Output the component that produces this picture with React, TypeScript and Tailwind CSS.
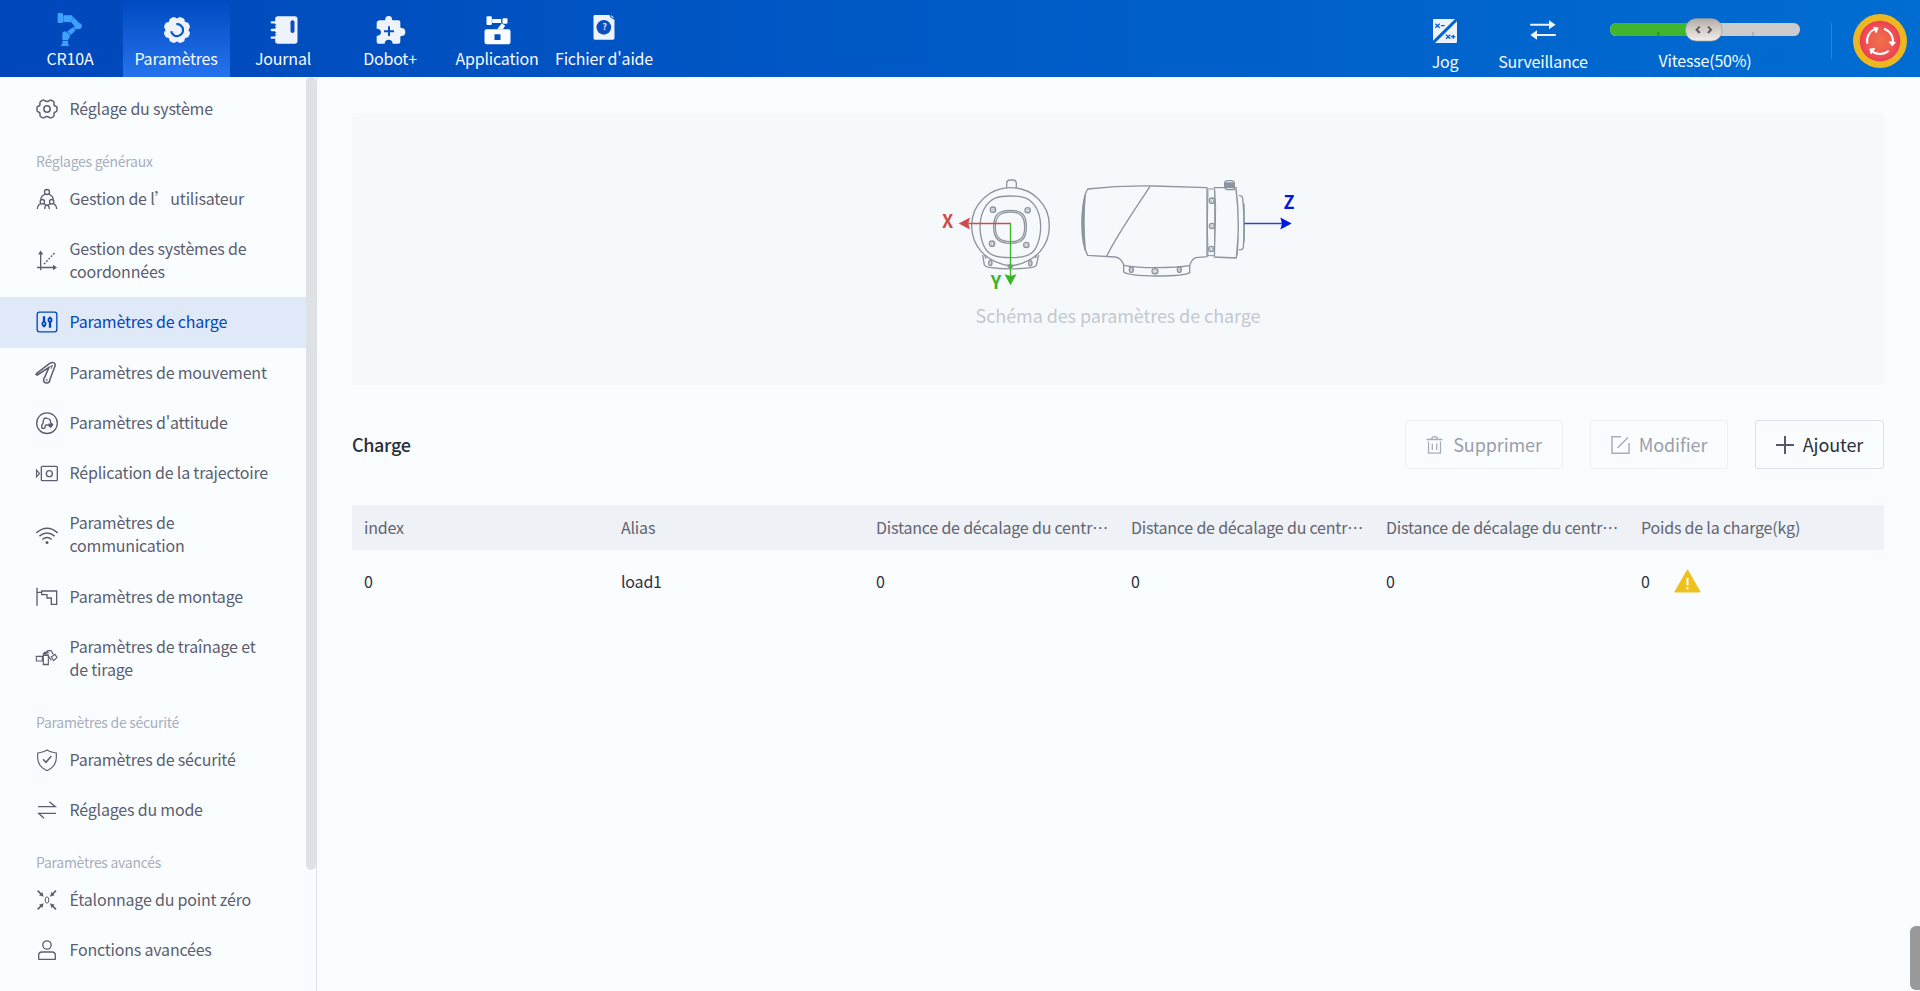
import type { ReactNode } from "react";

const FONT =
  "font-['Noto_Sans_CJK_SC','Noto_Sans',sans-serif]";

/* ---------- header icons (drawn on a 120 x 144 grid, 3 units per pixel) ---------- */

function HeadIcon({ box, children }: { box: string; children: ReactNode }) {
  return (
    <svg className="h-12 w-10 shrink-0" viewBox={box} fill="#eef3fb">
      {children}
    </svg>
  );
}

const RobotIcon = (
  <HeadIcon box="150 0 120 144">
    <g fill="#3ea0ff">
      <rect x="173" y="39" width="16" height="30" rx="3" />
      <path d="M190 46h26l3 6-6 15-23-1z" />
      <path d="M220 51l17 17-11 12-13-13z" />
      <path d="M236 68q10 2 10 11 0 7-7 8l-12 1-7-7z" />
      <path d="M218 82l9 8-13 14-13-9z" />
      <path d="M187 99q3-5 9-5l15 10-3 10-5 7h-16z" />
      <path d="M187 123h17v10l3 1v4h-24v-4l4-1z" />
    </g>
  </HeadIcon>
);

const ParamIcon = (
  <HeadIcon box="469.5 0 120 144">
    <g transform="translate(529.5 90)">
      {[0, 45, 90, 135, 180, 225, 270, 315].map((a) => (
        <rect key={a} x="-11" y="-40" width="22" height="30" rx="9" transform={`rotate(${a + 22.5})`} />
      ))}
      <circle r="35" />
      <path d="M-17.500 4A18 18 0 1 0 -2 -17.500" stroke="#0c56cb" strokeWidth="6.500" fill="none" />
    </g>
  </HeadIcon>
);

const JournalIcon = (
  <HeadIcon box="790.5 0 120 144">
    <rect x="824" y="49" width="67" height="82" rx="8" />
    <path d="M814 67h14M814 90h14M814 113h14" stroke="#eef3fb" strokeWidth="7" strokeLinecap="round" />
    <path d="M820 74.5h7M820 82h7M820 98h7M820 105h7" stroke="#0a4fc0" strokeWidth="3" />
    <rect x="870" y="61" width="12" height="38" rx="6" fill="#0a4fc0" />
  </HeadIcon>
);

const PluginIcon = (
  <HeadIcon box="93 0 120 144">
    <path d="M116 61h17q3 0 3-3a10 10 0 0 1 20 0q0 3 3 3h16q6 0 6 6v14q0 3 3 3a12 12 0 0 1 0 24q-3 0-3 3v14q0 6-6 6h-17q-1-12-12-12t-12 12h-18q-6 0-6-6v-17q13-1 13-11t-13-11v-18q0-6 6-6z" />
    <path d="M147 79v29M132 94h30" stroke="#0a4fc0" strokeWidth="6" />
  </HeadIcon>
);

const AppIcon = (
  <HeadIcon box="412.5 0 120 144">
    <g fill="#fafdff">
      <path fillRule="evenodd" d="M438 88h66q6 0 6 6v33q0 6-6 6h-66q-6 0-6-6v-33q0-6 6-6zm24 15v17h18v-17z" />
      <rect x="438" y="49" width="16" height="26" rx="3" />
      <rect x="455" y="57" width="27" height="12" />
      <rect x="486" y="55" width="15" height="16" rx="3" />
      <path d="M484 70l10 7-7 11h-17z" />
    </g>
  </HeadIcon>
);

const HelpIcon = (
  <HeadIcon box="733.5 0 120 144">
    <path d="M763 45h44q2 10 15 14v55q0 5-5 5h-54q-4 0-4-5v-65q0-4 4-4z" />
    <path d="M812 45l9 9-8-2z" />
    <circle cx="790" cy="82" r="22" fill="#0a4fc0" />
    <text x="792" y="90" textAnchor="middle" fontSize="25" fontWeight="700">?</text>
  </HeadIcon>
);

/* ---------- side menu icons (72 x 72 grid, 3 units per pixel) ---------- */

function SideIcon({ box, children }: { box: string; children: ReactNode }) {
  return (
    <svg className="size-6 shrink-0" viewBox={box} fill="none" stroke="currentColor" strokeWidth="4">
      {children}
    </svg>
  );
}

const GearIcon = (
  <SideIcon box="105 36 72 72">
    <path
      d="M127 46q4-2 7 1q7 5 14 0q3-3 7-1l5 3q3 2 2 6q-1 8 6 9q3 1 3 4v8q0 3-3 4q-7 1-6 9q1 4-2 6l-5 3q-4 2-7-1q-7-5-14 0q-3 3-7 1l-5-3q-3-2-2-6q1-8-6-9q-3-1-3-4v-8q0-3 3-4q7-1 6-9q-1-4 2-6z"
      strokeWidth="4.500"
      strokeLinejoin="round"
    />
    <circle cx="141" cy="72" r="9.500" strokeWidth="4.500" />
  </SideIcon>
);

const UsersIcon = (
  <SideIcon box="105 306 72 72">
    <circle cx="141" cy="321" r="7.5" />
    <circle cx="127" cy="350" r="6.5" />
    <circle cx="155" cy="350" r="6.5" />
    <path d="M135 328q-12 4-13 16M147 328q12 4 13 16M112 372q1-14 12-16M138 364q-1-7-8-8M134 372q1-12 7-12t7 12M144 364q1-7 8-8M170 372q-1-14-12-16" />
  </SideIcon>
);

const AxesIcon = (
  <SideIcon box="105 490.5 72 72">
    <path d="M122 500v54M111 546h52" />
    <path d="M114 507l8-12 8 12zM159 538l12 8-12 8z" fill="currentColor" stroke="none" />
    <path d="M132 536l32-34" strokeDasharray="6 4" />
  </SideIcon>
);

const LoadIcon = (
  <SideIcon box="105 675 72 72">
    <rect x="111.500" y="681.500" width="59" height="59" rx="7" />
    <path d="M132 694v32M150 698v30" strokeWidth="7" />
    <circle cx="132" cy="716" r="5" fill="#e0e9f8" strokeWidth="5" />
    <circle cx="150" cy="705" r="5" fill="#e0e9f8" strokeWidth="5" />
    <path d="M126 720l6 8 6-8zM144 701l6-8 6 8z" fill="currentColor" stroke="none" />
  </SideIcon>
);

const MotionIcon = (
  <SideIcon box="105 31 72 72">
    <path
      d="M109 69l40-31q8-5 14-1q5 5 1 12l-14 37q-1 11-10 11t-9-8q-1-5 3-9l13-30-35 23q-6-1-3-4z"
      strokeWidth="4.500"
      strokeLinejoin="round"
    />
    <path d="M147 50l10-6-3 10" strokeWidth="3" />
    <circle cx="140" cy="88" r="2.500" strokeWidth="2" />
  </SideIcon>
);

const PoseIcon = (
  <SideIcon box="105 182.500 72 72">
    <circle cx="141" cy="219" r="31" />
    <path d="M126 234q-3-9 3-15l2-12q5-6 11-2l8 3 2 10 6 5-6 8-8-7-8 1-1 8q-5 3-9 1z" strokeWidth="4" strokeLinejoin="round" />
    <path d="M146 219l14 3-6 10-9-6z" fill="currentColor" stroke="none" />
  </SideIcon>
);

const ReplayIcon = (
  <SideIcon box="105 332 72 72">
    <rect x="124" y="348" width="48" height="43" rx="3" />
    <circle cx="148" cy="370" r="9" />
    <path d="M109.500 359v21l9-10.500z" strokeWidth="3.500" />
  </SideIcon>
);

const WifiIcon = (
  <SideIcon box="105 517.500 72 72">
    <path d="M109 547q32-28 64 0M118 557q23-19 46 0M127 567q14-12 28 0" strokeWidth="4.500" />
    <circle cx="141" cy="576" r="4.500" fill="currentColor" stroke="none" />
  </SideIcon>
);

const MountIcon = (
  <SideIcon box="105 28 72 72">
    <path d="M111 36v54M111 50h14M125 46h45v40h-16v-19h-13v-10h-16z" />
  </SideIcon>
);

const DragIcon = (
  <SideIcon box="105 213 72 72">
    <path
      d="M109 244h18v14h-18zM130 241h15v28h-15zM130 241v-6q9 1 10-5 2-4 8-3h5l7 11M146 244l8 12M154 246l11-8 6 9-10 10zM132 232h14M132 237h14M128 268h18"
      strokeWidth="3.300"
    />
  </SideIcon>
);

const ShieldIcon = (
  <SideIcon box="105 518 72 72">
    <path d="M141 524l7 4q9 4 21 5v14q-1 27-28 39-27-12-28-39v-14q12-1 21-5z" strokeWidth="3.500" />
    <path d="M129 552l9 9 16-19" strokeWidth="4.500" />
  </SideIcon>
);

const ModeIcon = (
  <SideIcon box="105 -6 72 72">
    <path d="M114 20h52l-18-15M168 40h-52l16 15" />
  </SideIcon>
);

const ZeroIcon = (
  <SideIcon box="105 264 72 72">
    <ellipse cx="141" cy="300" rx="5.500" ry="9.500" strokeWidth="3" />
    <path d="M113 272l10 10M168 272l-10 10M113 328l10-10M168 328l-10-10" strokeWidth="5" />
    <path
      d="M131 290l-14-4 10-10zM150 290l14-4-10-10zM131 310l-14 4 10 10zM150 310l14 4-10 10z"
      fill="currentColor"
      stroke="none"
    />
  </SideIcon>
);

const PersonIcon = (
  <SideIcon box="105 414 72 72">
    <circle cx="141" cy="435" r="12.500" />
    <path d="M116 478v-12q0-10 10-10h30q10 0 10 10v12z" strokeLinejoin="round" />
  </SideIcon>
);

/* ---------- layout pieces ---------- */

function Tab({ icon, label, active = false }: { icon: ReactNode; label: string; active?: boolean }) {
  return (
    <div
      className={`flex w-[107px] shrink-0 flex-col items-center whitespace-nowrap ${
        active ? "bg-gradient-to-b from-[#004abf] to-[#2473ee]" : ""
      }`}
    >
      {icon}
      <span className="-mt-px pr-[1px] leading-[22px]">{label}</span>
    </div>
  );
}

function MenuItem({ icon, lines, active = false }: { icon: ReactNode; lines: string[]; active?: boolean }) {
  return (
    <div
      className={`flex w-[306px] shrink-0 items-center gap-[10.5px] pl-[35px] ${
        lines.length > 1 ? "h-[73.4px]" : "h-[50.2px]"
      } ${active ? "bg-[#e0e9f8] text-[#0047bb]" : "text-[#5c5e6f]"}`}
    >
      {icon}
      <span className="pb-[1px] text-[16px] leading-[23px] tracking-[-0.2px] whitespace-nowrap">
        {lines.map((l) => (
          <span key={l} className="block">
            {l}
          </span>
        ))}
      </span>
    </div>
  );
}

function MenuLabel({ children }: { children: ReactNode }) {
  return (
    <div className="flex h-[39.6px] shrink-0 items-end pb-[1.500px] pl-[36px] text-[14px] leading-[22px] tracking-[-0.28px] text-[#a8aebb]">
      {children}
    </div>
  );
}

function Screw({ x, y, rx = 8, ry = 8 }: { x: number; y: number; rx?: number; ry?: number }) {
  return (
    <g>
      <ellipse cx={x} cy={y} rx={rx} ry={ry} strokeWidth="4" />
      <ellipse cx={x + 1} cy={y + 1} rx={rx * 0.5} ry={ry * 0.5} strokeWidth="2" />
    </g>
  );
}

function LoadDiagram() {
  return (
    <svg className="mr-[6px] h-[130px] w-[390px]" viewBox="0 35 1170 390" fill="none" stroke="#8d949e" strokeWidth="4" strokeLinejoin="round">
      {/* flange seen from the front */}
      <path d="M260 82v-14q1-9 10-9h9q9 0 10 9v14" />
      <path d="M272 82C335 82 388 130 388 196C388 250 355 305 272 317C190 305 155 250 155 196C155 130 210 82 272 82z" />
      <path d="M272 107C315 107 330 115 346 138C368 172 366 226 348 262C335 286 312 292 271 292C230 292 208 286 194 262C176 226 174 172 197 138C213 115 229 107 272 107z" />
      <path d="M271 150C306 150 319 163 319 200C319 235 306 249 271 249C236 249 221 235 221 200C221 163 236 150 271 150z" />
      <path d="M271 155C302 155 314 168 314 200C314 232 302 244 271 244C240 244 226 232 226 200C226 168 240 155 271 155z" />
      <Screw x={219} y={148} />
      <Screw x={323} y={150} />
      <Screw x={216} y={250} />
      <Screw x={319} y={254} />
      <path d="M188 284l5 30q3 5 14 7q62 9 130 0q9-2 12-6l7-31M194 284l4 11M350 284l-4 10" />
      <Screw x={211} y={308} rx={5} ry={8} />
      <Screw x={331} y={309} rx={5} ry={8} />
      <Screw x={271} y={317} rx={7} ry={4} />
      {/* arm seen from the side */}
      <path d="M503 86Q600 75 700 77L861 82V289L828 292Q815 296 809 316V337Q795 347 710 347Q625 346 611 335V313Q603 292 585 290L503 285Q484 250 486 182Q488 110 503 86z" />
      <path d="M496 103Q485 145 487 195Q489 250 496 270Q492 225 492 185Q492 140 496 103z" fill="#8d949e" />
      <path d="M690 78C660 125 590 225 560 288" />
      <path d="M611 315Q650 322 705 322Q770 322 809 316" />
      <Screw x={634} y={328} rx={6} ry={8} />
      <Screw x={705} y={333} rx={9} ry={8} />
      <Screw x={778} y={328} rx={6} ry={8} />
      <path d="M861 86H884V286H861M864 90q-4 100 0 194M884 88q5 50 2 110l-3 88" strokeWidth="3" />
      <Screw x={876} y={121} />
      <Screw x={876} y={197} />
      <Screw x={874} y={266} />
      <path d="M881 82H948Q957 150 954 230L949 293L881 290M948 88q12 90 3 198M957 106q9-2 11 8q8 70 2 148q-3 8-14 6" />
      <path d="M972 130v115" />
      <path d="M914 82v-14q1-7 9-7h12q7 1 8 7v20h-23z" />
      <path d="M914 68h29v12h-29z" fill="#8d949e" />
      {/* axes */}
      <g strokeWidth="4">
        <path d="M273 189.500H145" stroke="#d04a4a" />
        <path d="M116 189.500l34-18-5 18 5 18z" fill="#d04a4a" stroke="none" />
        <path d="M271.500 189v158" stroke="#3bb526" />
        <path d="M271.500 375l-18-33 18 5 18-5z" fill="#3bb526" stroke="none" />
        <path d="M973 189.500H1090" stroke="#2a43d0" />
        <path d="M1115 189.500l-34-18 5 18-5 18z" fill="#0019dc" stroke="none" />
      </g>
      <g stroke="none" fontSize="54" fontWeight="700" textAnchor="middle">
        <text x="83" y="203" fill="#d04a4a">X</text>
        <text x="228" y="386" fill="#3bb526">Y</text>
        <text x="1107" y="146" fill="#0019dc">Z</text>
      </g>
    </svg>
  );
}

const COLUMNS = [
  "index",
  "Alias",
  "Distance de décalage du centr…",
  "Distance de décalage du centr…",
  "Distance de décalage du centr…",
  "Poids de la charge(kg)",
];
const ROW = ["0", "load1", "0", "0", "0", "0"];
const GRID = "grid grid-cols-[257px_255px_255px_255px_255px_255px] items-center";

export default function App() {
  return (
    <div className={`flex h-[991px] w-[1920px] flex-col overflow-hidden bg-[#fafdff] ${FONT}`} lang="zh-CN">
      <header className="flex h-[77px] shrink-0 bg-gradient-to-r from-[#0047bb] to-[#006dd2] text-[16px] tracking-[-0.2px] text-[#f7faff]">
        <div className="-mr-[17px] flex w-[140px] flex-col items-center">
          {RobotIcon}
          <span className="-mt-px leading-[22px]">CR10A</span>
        </div>
        <Tab icon={ParamIcon} label="Paramètres" active />
        <Tab icon={JournalIcon} label="Journal" />
        <Tab icon={PluginIcon} label="Dobot+" />
        <Tab icon={AppIcon} label="Application" />
        <Tab icon={HelpIcon} label="Fichier d'aide" />

        <div className="ml-auto flex">
          <div className="flex w-[60px] flex-col items-center pt-[18px]">
            <svg className="mr-[2px] h-[26px] w-[26px]" viewBox="96 54 78 78">
              <path d="M102 57h63L99 122V60q0-3 3-3zM171 64v61q0 4-4 4h-62z" fill="#eef3fb" />
              <path d="M106 71l13 12M119 71l-13 12M123 77h11M138 104l13 12M151 104l-13 12M153 110h13M160 104v12" stroke="#0560cb" strokeWidth="4" />
            </svg>
            <span className="mt-[6px] pr-[2px] leading-[22px]">Jog</span>
          </div>
          <div className="ml-[22px] flex w-[92px] flex-col items-center pt-[18px]">
            <svg className="mr-[2px] h-[26px] w-[26px]" viewBox="390 54 78 78" fill="#eef3fb">
              <path d="M393 74.500h60M405 105h60" stroke="#eef3fb" strokeWidth="6" strokeLinecap="round" />
              <path d="M447 61l20 13.500-20 13.500zM411 91l-20 14 20 14z" />
            </svg>
            <span className="mt-[6px] pr-[2px] leading-[22px]">Surveillance</span>
          </div>
          <div className="ml-[20px] flex w-[190px] flex-col items-center pt-[18px]">
            <svg className="h-[24px] w-[190px]" viewBox="630 54 570 72">
              <defs>
                <linearGradient id="knob" x1="0" y1="0" x2="0" y2="1">
                  <stop offset="0" stopColor="#b5aca6" />
                  <stop offset="1" stopColor="#f3efec" />
                </linearGradient>
              </defs>
              <rect x="630" y="69" width="570" height="39" rx="19" fill="#cbcbcb" />
              <path d="M649 69h260v39h-260a19 19.500 0 0 1 0-39z" fill="#3fb62d" />
              <path d="M775 96v12" stroke="#2c9a2c" strokeWidth="8" />
              <path d="M1059 96v12" stroke="#b3b3b3" strokeWidth="6" />
              <rect x="857" y="56" width="109" height="67" rx="31" fill="url(#knob)" stroke="#a39d98" strokeWidth="2" />
              <path d="M899 80l-9 9 9 10M924 80l9 9-9 10" stroke="#5c5855" strokeWidth="6" fill="none" />
            </svg>
            <span className="mt-[7px] leading-[22px]">Vitesse(50%)</span>
          </div>
          <div className="mt-[23px] ml-[31px] h-9 w-px bg-[#2b82d8]" />
          <svg className="mt-[13px] mr-[12px] ml-[20px] size-[56px]" viewBox="1356 39 168 168">
            <defs>
              <radialGradient id="stop">
                <stop offset="0" stopColor="#f0704a" />
                <stop offset="0.6" stopColor="#ee5c50" />
                <stop offset="1" stopColor="#ec3c58" />
              </radialGradient>
            </defs>
            <circle cx="1440" cy="123" r="81" fill="#edb721" />
            <circle cx="1440" cy="123" r="61" fill="url(#stop)" />
            <g stroke="#fff" strokeWidth="6" fill="none">
              {[0, 120, 240].map((a) => (
                <g key={a} transform={`rotate(${a} 1440 123)`}>
                  <path d="M1402 131A39 39 0 0 1 1428 86" />
                  <path d="M1418 81l15 4-8 15z" fill="#fff" stroke="none" transform="translate(2 -1)" />
                  <path d="M1420 82l13 3-5 13" strokeWidth="4" />
                </g>
              ))}
            </g>
          </svg>
        </div>
      </header>

      <div className="flex min-h-0 flex-1">
        <aside className="flex w-[317px] shrink-0 border-r border-[#dcdfe6]">
          <nav className="flex w-[306px] shrink-0 flex-col pt-[7px]">
            <MenuItem icon={GearIcon} lines={["Réglage du système"]} />
            <MenuLabel>Réglages généraux</MenuLabel>
            <MenuItem icon={UsersIcon} lines={["Gestion de l’utilisateur"]} />
            <MenuItem icon={AxesIcon} lines={["Gestion des systèmes de", "coordonnées"]} />
            <MenuItem icon={LoadIcon} lines={["Paramètres de charge"]} active />
            <MenuItem icon={MotionIcon} lines={["Paramètres de mouvement"]} />
            <MenuItem icon={PoseIcon} lines={["Paramètres d'attitude"]} />
            <MenuItem icon={ReplayIcon} lines={["Réplication de la trajectoire"]} />
            <MenuItem icon={WifiIcon} lines={["Paramètres de", "communication"]} />
            <MenuItem icon={MountIcon} lines={["Paramètres de montage"]} />
            <MenuItem icon={DragIcon} lines={["Paramètres de traînage et", "de tirage"]} />
            <MenuLabel>Paramètres de sécurité</MenuLabel>
            <MenuItem icon={ShieldIcon} lines={["Paramètres de sécurité"]} />
            <MenuItem icon={ModeIcon} lines={["Réglages du mode"]} />
            <MenuLabel>Paramètres avancés</MenuLabel>
            <MenuItem icon={ZeroIcon} lines={["Étalonnage du point zéro"]} />
            <MenuItem icon={PersonIcon} lines={["Fonctions avancées"]} />
          </nav>
          <div className="h-[793px] w-[10px] shrink-0 rounded-full bg-[#dfe2e5]" />
        </aside>

        <main className="flex w-[1567px] shrink-0 flex-col pl-[35px]">
          <section className="mt-[36px] flex h-[272px] shrink-0 flex-col items-center rounded-sm bg-[#f6f9fc] pt-[59px]">
            <LoadDiagram />
            <p className="-mt-px text-[18px] leading-[28px] tracking-[-0.08px] text-[#c3c8d0]">Schéma des paramètres de charge</p>
          </section>

          <div className="mt-[35px] flex h-[49px] shrink-0 items-center justify-between">
            <h2 className="text-[18px] font-medium tracking-[-0.35px] text-[#2b2f3a]">Charge</h2>
            <div className="flex gap-[27px] text-[18px] tracking-[-0.1px]">
              <button className="flex h-[49px] w-[158px] items-center justify-center rounded-[3px] border border-[#edf0f4] text-[#9a9fa9]">
                <svg className="mr-[10px] h-[18px] w-[17px]" viewBox="0 0 17 18" fill="none" stroke="#a9adb6" strokeWidth="1.300">
                  <path d="M.5 3.500h16M5.500 3.500q0-2.800 3-2.800t3 2.800M2.500 5.500v11.700h12V5.500M6.300 7.500v6.500M10.700 7.500v6.500" />
                </svg>
                Supprimer
              </button>
              <button className="flex h-[49px] w-[138px] items-center justify-center rounded-[3px] border border-[#edf0f4] text-[#9a9fa9]">
                <svg className="mr-[9px] h-[18px] w-[19px]" viewBox="0 0 19 18" fill="none" stroke="#a9adb6" strokeWidth="1.500">
                  <path d="M10 .8H1v16.400h17V7M6.500 12L17 1.500" />
                </svg>
                Modifier
              </button>
              <button className="flex h-[49px] w-[129px] items-center justify-center rounded-[3px] border border-[#dcdfe6] text-[#2b2f3a]">
                <svg className="mr-[9px] size-[18px]" viewBox="0 0 18 18" stroke="#55586a" strokeWidth="2">
                  <path d="M9 0v18M0 9h18" />
                </svg>
                Ajouter
              </button>
            </div>
          </div>

          <div className="mt-[36px] text-[16px] tracking-[-0.2px]">
            <div className={`${GRID} h-[45px] bg-[#eef1f6] pb-[2px] text-[#62656f]`}>
              {COLUMNS.map((c, i) => (
                <div key={i} className="pl-[12px] whitespace-nowrap">
                  {c}
                </div>
              ))}
            </div>
            <div className={`${GRID} h-[62px] text-[#2f333d]`}>
              {ROW.map((c, i) => (
                <div key={i} className="flex items-center pl-[12px]">
                  {c}
                  {i === 5 && (
                    <svg className="ml-[24px] h-[24px] w-[27px]" viewBox="0 0 27 24">
                      <path d="M13.500.8L26.200 23H.8z" fill="#efc11c" stroke="#efc11c" strokeWidth="1" strokeLinejoin="round" />
                      <path d="M13.500 9v7.500M13.500 18.200v2" stroke="#fff" strokeWidth="2" />
                    </svg>
                  )}
                </div>
              ))}
            </div>
          </div>
        </main>
        <div className="mt-auto mb-[1px] ml-[26px] h-[64px] w-[14px] shrink-0 rounded-[6px] bg-[#98999b]" />
      </div>
    </div>
  );
}
